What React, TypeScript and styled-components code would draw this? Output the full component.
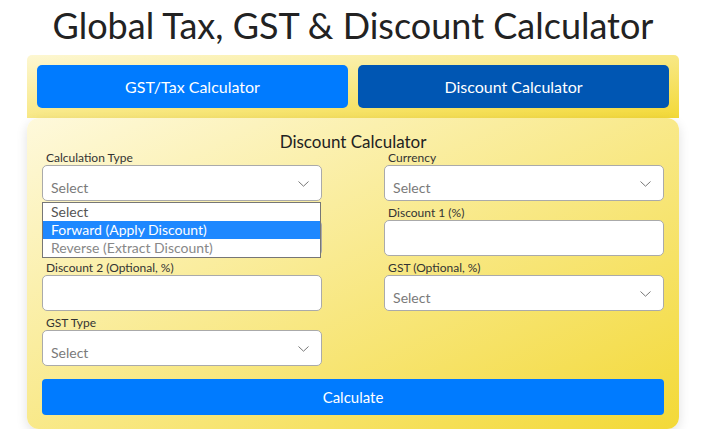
import React from 'react'
import styled, { createGlobalStyle } from 'styled-components'

const GlobalStyle = createGlobalStyle`
  html, body {
    margin: 0;
    padding: 0;
    background: #ffffff;
  }
  body {
    font-family: Lato, "Open Sans", Arial, sans-serif;
    color: #222;
  }
  * {
    box-sizing: border-box;
  }
`

const Page = styled.div`
  padding: 4px 23px 0 27px;
`

const Title = styled.h1`
  margin: 0 0 8px;
  font-size: 36px;
  font-weight: 400;
  line-height: 43px;
  text-align: center;
  color: #222;
`

const TabBar = styled.div`
  display: flex;
  gap: 10px;
  padding: 10px;
  border-radius: 5px 5px 0 0;
  background: linear-gradient(to bottom right, #fdf7d2, #f3d938);
`

const TabButton = styled.button<{ $active?: boolean }>`
  flex: 1;
  height: 43px;
  padding: 0 0 1px;
  border: none;
  border-radius: 5px;
  background: ${(p) => (p.$active ? '#0056b3' : '#007bff')};
  color: #fff;
  font-family: inherit;
  font-size: 16px;
  cursor: pointer;
`

const Card = styled.div`
  padding: 15px 15px 14px;
  border-radius: 12px;
  background: linear-gradient(to bottom right, #fef9dc, #f3d937);
  box-shadow: 0 4px 12px rgba(0, 0, 0, 0.12);
`

const CardTitle = styled.h2`
  margin: 0;
  font-size: 17px;
  font-weight: 400;
  line-height: 18px;
  text-align: center;
  color: #222;
`

const FieldGrid = styled.div`
  display: grid;
  grid-template-columns: 45% 45%;
  justify-content: space-between;
  row-gap: 5px;
`

const Field = styled.div`
  position: relative;
  display: flex;
  flex-direction: column;
`

const Label = styled.label`
  min-height: 14px;
  padding-left: 4px;
  font-size: 12px;
  line-height: 14px;
  color: #333;
`

const TextInput = styled.input`
  height: 36px;
  padding: 10px 9px 2px;
  border: 1px solid #aaa;
  border-radius: 5px;
  background: #fff;
  font-family: inherit;
  font-size: 14px;
  outline: none;
`

const SelectWrap = styled.div`
  position: relative;
`

const Select = styled.select`
  width: 100%;
  height: 36px;
  padding: 10px 30px 2px 8px;
  border: 1px solid #aaa;
  border-radius: 5px;
  background: #fff;
  appearance: none;
  font-family: inherit;
  font-size: 14px;
  color: #7a7a7a;
  outline: none;
`

const Chevron = styled.svg`
  position: absolute;
  right: 13px;
  top: calc(50% - 2px);
  pointer-events: none;
`

const OptionList = styled.ul`
  position: absolute;
  top: calc(100% + 1px);
  left: 0;
  right: 1px;
  z-index: 2;
  margin: 0;
  padding: 0;
  list-style: none;
  border: 1px solid #767676;
  background: #fff;
`

const OptionItem = styled.li<{ $selected?: boolean; $muted?: boolean }>`
  height: 18px;
  padding-left: 8px;
  font-size: 14px;
  line-height: 18px;
  background: ${(p) => (p.$selected ? '#1e88ff' : 'transparent')};
  color: ${(p) => (p.$selected ? '#fff' : p.$muted ? '#888' : '#555')};
`

const CalcButton = styled.button`
  width: 100%;
  height: 36px;
  margin-top: 13px;
  border: none;
  border-radius: 4px;
  background: #007bff;
  color: #fff;
  font-family: inherit;
  font-size: 15px;
  cursor: pointer;
`

const ChevronIcon = () => (
  <Chevron width="11" height="6" viewBox="0 0 11 6" fill="none">
    <path d="M0.5 0.5 L5.5 5.2 L10.5 0.5" stroke="#777" strokeWidth="1" />
  </Chevron>
)

type SelectFieldProps = {
  label: string
  open?: boolean
  options?: string[]
}

const SelectField = ({ label, open, options = [] }: SelectFieldProps) => (
  <Field>
    <Label>{label}</Label>
    <SelectWrap>
      <Select defaultValue="">
        <option value="">Select</option>
        {options.map((o) => (
          <option key={o} value={o}>
            {o}
          </option>
        ))}
      </Select>
      <ChevronIcon />
      {open && (
        <OptionList>
          <OptionItem>Select</OptionItem>
          <OptionItem $selected>{options[0]}</OptionItem>
          <OptionItem $muted>{options[1]}</OptionItem>
        </OptionList>
      )}
    </SelectWrap>
  </Field>
)

const InputField = ({ label }: { label?: string }) => (
  <Field>
    <Label>{label}</Label>
    <TextInput type="text" aria-label={label ? undefined : 'Original price'} />
  </Field>
)

export default function App() {
  return (
    <>
      <GlobalStyle />
      <Page>
        <Title>Global Tax, GST &amp; Discount Calculator</Title>
        <TabBar>
          <TabButton>GST/Tax Calculator</TabButton>
          <TabButton $active>Discount Calculator</TabButton>
        </TabBar>
        <Card>
          <CardTitle>Discount Calculator</CardTitle>
          <FieldGrid>
            <SelectField
              label="Calculation Type"
              open
              options={['Forward (Apply Discount)', 'Reverse (Extract Discount)']}
            />
            <SelectField label="Currency" options={['USD', 'EUR', 'INR']} />
            {/* sits under the open dropdown */}
            <InputField />
            <InputField label="Discount 1 (%)" />
            <InputField label="Discount 2 (Optional, %)" />
            <SelectField label="GST (Optional, %)" options={['5%', '12%', '18%', '28%']} />
            <SelectField label="GST Type" options={['Inclusive', 'Exclusive']} />
          </FieldGrid>
          <CalcButton>Calculate</CalcButton>
        </Card>
      </Page>
    </>
  )
}
